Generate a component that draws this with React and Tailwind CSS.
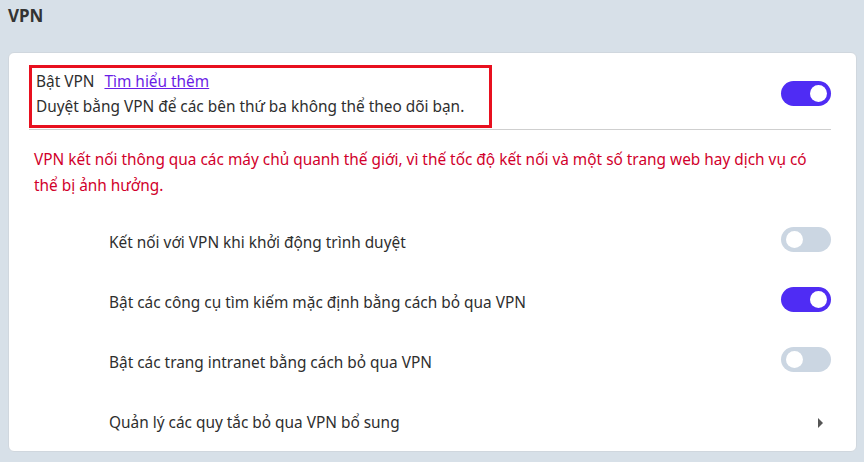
import React, { useState } from "react";

const Toggle = ({ on, onClick }) => (
  <button
    onClick={onClick}
    className={`relative h-[25px] w-[50px] shrink-0 rounded-full ${
      on ? "bg-[#4f2cf4]" : "bg-[#cbd6e2]"
    }`}
  >
    <span
      className={`absolute top-[4px] h-[17px] w-[17px] rounded-full bg-white ${
        on ? "left-[29px]" : "left-[5px]"
      }`}
    />
  </button>
);

const App = () => {
  const [vpn, setVpn] = useState(true);
  const [rows, setRows] = useState([false, true, false]);

  const labels = [
    "Kết nối với VPN khi khởi động trình duyệt",
    "Bật các công cụ tìm kiếm mặc định bằng cách bỏ qua VPN",
    "Bật các trang intranet bằng cách bỏ qua VPN",
  ];

  const flip = (i) => setRows(rows.map((r, j) => (j === i ? !r : r)));

  return (
    <div className="h-[462px] w-full overflow-hidden bg-[#d7e0e8] px-2 pt-[5px] font-['Noto_Sans',sans-serif] text-[15.4px] text-[#2e2e2e]">
      <h1 className="h-[22px] text-[17px] font-bold leading-[22px] text-[#333]">VPN</h1>
      <div className="mt-[25px] h-[400px] w-[849px] rounded-md border border-[#d0d7de] bg-white pl-[20px] pr-[25px] pt-[12px]">
        <div className="flex items-center border-b border-[#cfcfcf] pb-[1px]">
          <div className="h-[63px] w-[463px] border-[3px] border-[#e8101f] pl-[4px] pt-[1px]">
            <div className="flex gap-[10px] leading-[25px]">
              <span>Bật VPN</span>
              <a href="#" className="text-[#6a1de6] underline">Tìm hiểu thêm</a>
            </div>
            <div className="leading-[25px]">Duyệt bằng VPN để các bên thứ ba không thể theo dõi bạn.</div>
          </div>
          <div className="ml-auto">
            <Toggle on={vpn} onClick={() => setVpn(!vpn)} />
          </div>
        </div>
        <p className="pl-[5px] pt-[17px] leading-[26px] text-[#d1002b]">
          VPN kết nối thông qua các máy chủ quanh thế giới, vì thế tốc độ kết nối và một số trang web hay dịch vụ có thể bị ảnh hưởng.
        </p>
        <div className="mt-[31px] flex flex-col gap-[35px] pl-[80px]">
          {labels.map((l, i) => (
            <div key={i} className="flex h-[25px] items-center">
              <span>{l}</span>
              <div className="ml-auto">
                <Toggle on={rows[i]} onClick={() => flip(i)} />
              </div>
            </div>
          ))}
          <div className="flex h-[25px] items-center">
            <span>Quản lý các quy tắc bỏ qua VPN bổ sung</span>
            <span className="ml-auto mr-[8px] h-0 w-0 border-y-[5px] border-l-[5px] border-y-transparent border-l-[#555]" />
          </div>
        </div>
      </div>
    </div>
  );
};

export default App;
